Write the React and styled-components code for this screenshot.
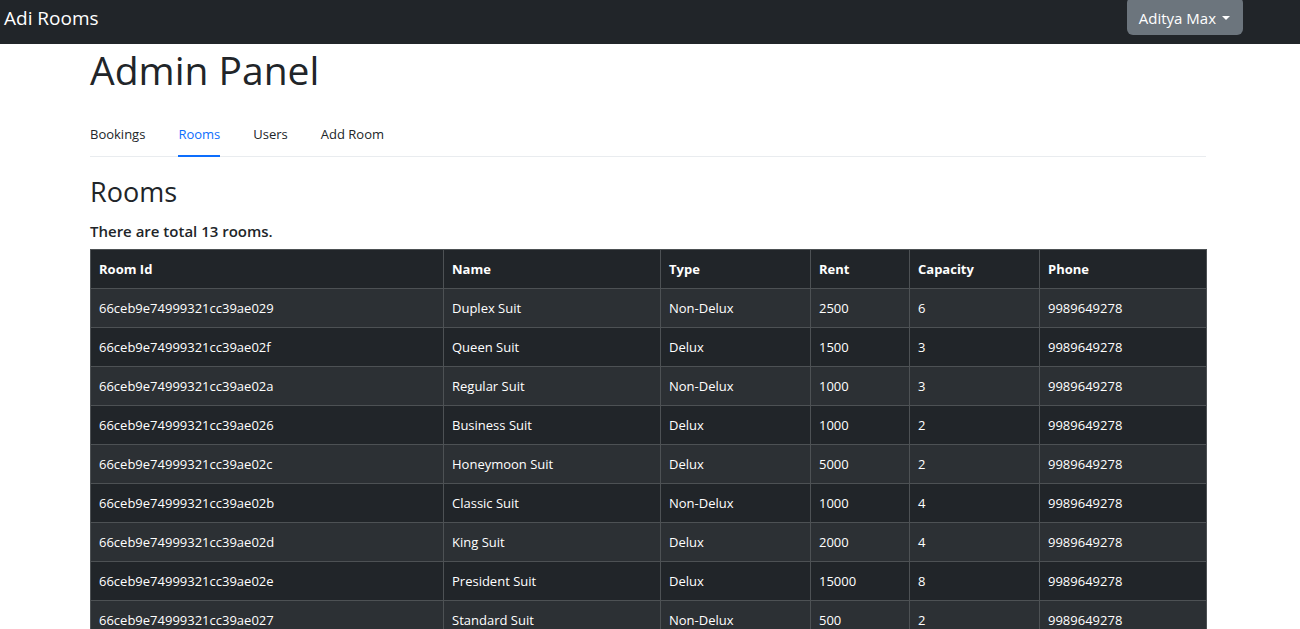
import React from 'react';
import styled, { createGlobalStyle } from 'styled-components';

const ROOMS = [
  { id: '66ceb9e74999321cc39ae029', name: 'Duplex Suit', type: 'Non-Delux', rent: 2500, capacity: 6, phone: '9989649278' },
  { id: '66ceb9e74999321cc39ae02f', name: 'Queen Suit', type: 'Delux', rent: 1500, capacity: 3, phone: '9989649278' },
  { id: '66ceb9e74999321cc39ae02a', name: 'Regular Suit', type: 'Non-Delux', rent: 1000, capacity: 3, phone: '9989649278' },
  { id: '66ceb9e74999321cc39ae026', name: 'Business Suit', type: 'Delux', rent: 1000, capacity: 2, phone: '9989649278' },
  { id: '66ceb9e74999321cc39ae02c', name: 'Honeymoon Suit', type: 'Delux', rent: 5000, capacity: 2, phone: '9989649278' },
  { id: '66ceb9e74999321cc39ae02b', name: 'Classic Suit', type: 'Non-Delux', rent: 1000, capacity: 4, phone: '9989649278' },
  { id: '66ceb9e74999321cc39ae02d', name: 'King Suit', type: 'Delux', rent: 2000, capacity: 4, phone: '9989649278' },
  { id: '66ceb9e74999321cc39ae02e', name: 'President Suit', type: 'Delux', rent: 15000, capacity: 8, phone: '9989649278' },
  { id: '66ceb9e74999321cc39ae027', name: 'Standard Suit', type: 'Non-Delux', rent: 500, capacity: 2, phone: '9989649278' },
  { id: '66ceb9e74999321cc39ae028', name: 'Deluxe Suit', type: 'Delux', rent: 3000, capacity: 3, phone: '9989649278' },
];

const COLUMNS = [
  { key: 'id', label: 'Room Id', width: 353 },
  { key: 'name', label: 'Name', width: 217 },
  { key: 'type', label: 'Type', width: 150 },
  { key: 'rent', label: 'Rent', width: 99 },
  { key: 'capacity', label: 'Capacity', width: 130 },
  { key: 'phone', label: 'Phone', width: 167 },
];

const TABS = ['Bookings', 'Rooms', 'Users', 'Add Room'];

export default function App() {
  return (
    <>
      <GlobalStyle />
      <Navbar>
        <Brand>Adi Rooms</Brand>
        <UserButton type="button">
          Aditya Max
          <Caret />
        </UserButton>
      </Navbar>

      <Container>
        <Title>Admin Panel</Title>

        <Tabs>
          {TABS.map((t) => (
            <Tab key={t} $active={t === 'Rooms'}>
              {t}
            </Tab>
          ))}
        </Tabs>

        <SectionTitle>Rooms</SectionTitle>
        <Total>There are total 13 rooms.</Total>

        <Table>
          <colgroup>
            {COLUMNS.map((c) => (
              <col key={c.key} style={{ width: c.width }} />
            ))}
          </colgroup>
          <thead>
            <tr>
              {COLUMNS.map((c) => (
                <Th key={c.key}>{c.label}</Th>
              ))}
            </tr>
          </thead>
          <tbody>
            {ROOMS.map((r, i) => (
              <Row key={r.id} $striped={i % 2 === 0}>
                {COLUMNS.map((c) => (
                  <Td key={c.key}>{r[c.key]}</Td>
                ))}
              </Row>
            ))}
          </tbody>
        </Table>
      </Container>
    </>
  );
}

const GlobalStyle = createGlobalStyle`
  * {
    box-sizing: border-box;
  }

  body {
    margin: 0;
    background: #fff;
    color: #212529;
    font-family: 'Open Sans', 'Noto Sans', sans-serif;
    font-size: 16px;
    overflow: hidden;
  }
`;

const Navbar = styled.nav`
  height: 44px;
  background: #212529;
  display: flex;
  align-items: flex-start;
  justify-content: space-between;
  padding: 0 57px 0 4px;
`;

const Brand = styled.a`
  color: #fff;
  font-size: 19px;
  line-height: 36px;
  text-decoration: none;
`;

const UserButton = styled.button`
  display: flex;
  align-items: center;
  gap: 6px;
  height: 38px;
  margin-top: -3px;
  padding: 3px 13px 0 12px;
  background: #6c757d;
  border: none;
  border-radius: 6px;
  color: #fff;
  font-family: inherit;
  font-size: 15px;
`;

const Caret = styled.span`
  width: 0;
  height: 0;
  border-left: 4px solid transparent;
  border-right: 4px solid transparent;
  border-top: 4px solid #fff;
`;

const Container = styled.main`
  width: 1116px;
  margin-left: 90px;
`;

const Title = styled.h1`
  margin: 0;
  padding-top: 2px;
  font-size: 39px;
  font-weight: 500;
  line-height: 48px;
`;

const Tabs = styled.div`
  display: flex;
  gap: 33px;
  margin-top: 29px;
  border-bottom: 1px solid #e9ecef;
`;

const Tab = styled.a`
  font-size: 13px;
  line-height: 20px;
  padding: 1px 0 11px;
  color: ${(p) => (p.$active ? '#0d6efd' : '#212529')};
  border-bottom: 2px solid ${(p) => (p.$active ? '#0d6efd' : 'transparent')};
  margin-bottom: -1px;
`;

const SectionTitle = styled.h2`
  margin: 18px 0 0;
  font-size: 27px;
  font-weight: 500;
  line-height: 34px;
`;

const Total = styled.p`
  margin: 11px 0 7px;
  font-size: 15px;
  font-weight: 600;
  line-height: 22px;
`;

const Table = styled.table`
  width: 1116px;
  table-layout: fixed;
  border-collapse: collapse;
  background: #212529;
  color: #fff;
  font-size: 13px;
`;

const Th = styled.th`
  height: 39px;
  padding: 0 8px;
  text-align: left;
  font-weight: 700;
  border: 1px solid #4d5154;
`;

const Row = styled.tr`
  background: ${(p) => (p.$striped ? '#2c3034' : '#212529')};
`;

const Td = styled.td`
  height: 39px;
  padding: 0 8px;
  border: 1px solid #4d5154;
  white-space: nowrap;
`;
